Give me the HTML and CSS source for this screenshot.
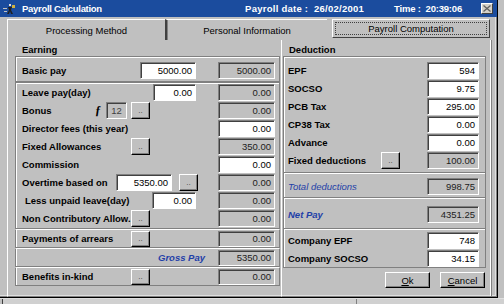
FILE: index.html
```html
<!DOCTYPE html>
<html>
<head>
<meta charset="utf-8">
<link rel="stylesheet" href="styles.css">
</head>
<body>
<div class="window">
  <div class="titlebar">
    <svg class="appicon" width="14" height="12" viewBox="0 0 14 12">
      <rect x="0" y="5" width="4" height="1" fill="#c0c0c0"/>
      <rect x="1" y="8" width="3" height="1" fill="#c0c0c0"/>
      <rect x="6" y="1" width="2" height="2" fill="#e0e0e0"/>
      <path d="M5 4 L9 4 L8 7 L10 11 L8 11 L7 8 L6 11 L4 11 L6 7 Z" fill="#202020"/>
      <rect x="9" y="2" width="3" height="3" fill="#d0b040"/>
    </svg>
    <span class="t-title">Payroll Calculation</span>
    <span class="t-date">Payroll date :&nbsp; 26/02/2001</span>
    <span class="t-time">Time :&nbsp; 20:39:06</span>
    <span class="t-close"><svg width="8" height="7" viewBox="0 0 8 7"><path d="M0.5 0.5 L7.5 6.5 M7.5 0.5 L0.5 6.5" stroke="#606060" stroke-width="1.3"/></svg></span>
  </div>
  <div class="tabs">
    <div class="tab t1">Processing Method</div>
    <div class="tab t2">Personal Information</div>
    <div class="tab t3"><span class="focus">Payroll Computation</span></div>
  </div>
  <div class="content">
    <section class="panel earning">
      <div class="phead">Earning</div>
      <div class="group g1">
        <div class="row"><span class="lbl">Basic pay</span><span class="fld wh w56 endi">5000.00</span><span class="fld ro rc">5000.00</span></div>
      </div>
      <div class="group g2">
        <div class="row"><span class="lbl">Leave pay(day)</span><span class="fld wh w43 endi">0.00</span><span class="fld ro rc">0.00</span></div>
        <div class="row"><span class="lbl">Bonus</span><span class="fn">ƒ</span><span class="fld ro w20 c12">12</span><span class="btn dots endb">..</span><span class="fld ro rc">0.00</span></div>
        <div class="row"><span class="lbl">Director fees (this year)</span><span class="fld wh rc">0.00</span></div>
        <div class="row"><span class="lbl">Fixed Allowances</span><span class="btn dots endb">..</span><span class="fld ro rc">350.00</span></div>
        <div class="row"><span class="lbl">Commission</span><span class="fld wh rc">0.00</span></div>
        <div class="row"><span class="lbl">Overtime based on</span><span class="fld wh w56 ot">5350.00</span><span class="btn dots endo">..</span><span class="fld ro rc">0.00</span></div>
        <div class="row"><span class="lbl ind">Less unpaid leave(day)</span><span class="fld wh w44 endi">0.00</span><span class="fld ro rc">0.00</span></div>
        <div class="row"><span class="lbl">Non Contributory Allow.</span><span class="btn dots endb">..</span><span class="fld ro rc">0.00</span></div>
      </div>
      <div class="group g3">
        <div class="row"><span class="lbl">Payments of arrears</span><span class="btn dots endb">..</span><span class="fld ro rc">0.00</span></div>
      </div>
      <div class="group g3">
        <div class="row"><span class="gross">Gross Pay</span><span class="fld ro rc">5350.00</span></div>
      </div>
      <div class="group g3">
        <div class="row"><span class="lbl">Benefits in-kind</span><span class="btn dots endb">..</span><span class="fld ro rc">0.00</span></div>
      </div>
    </section>
    <section class="panel deduction">
      <div class="phead">Deduction</div>
      <div class="group r1">
        <div class="row"><span class="lbl">EPF</span><span class="fld wh w52">594</span></div>
        <div class="row"><span class="lbl">SOCSO</span><span class="fld wh w52">9.75</span></div>
        <div class="row"><span class="lbl">PCB Tax</span><span class="fld wh w52">295.00</span></div>
        <div class="row"><span class="lbl">CP38 Tax</span><span class="fld wh w52">0.00</span></div>
        <div class="row"><span class="lbl">Advance</span><span class="fld wh w52">0.00</span></div>
        <div class="row"><span class="lbl">Fixed deductions</span><span class="btn dots endf">..</span><span class="fld ro w52">100.00</span></div>
      </div>
      <div class="group r2">
        <div class="row"><span class="lbl total">Total deductions</span><span class="fld ro w52">998.75</span></div>
      </div>
      <div class="group r3">
        <div class="row"><span class="lbl net">Net Pay</span><span class="fld ro w52">4351.25</span></div>
      </div>
      <div class="group r4">
        <div class="row"><span class="lbl">Company EPF</span><span class="fld wh w52">748</span></div>
        <div class="row"><span class="lbl">Company SOCSO</span><span class="fld wh w52">34.15</span></div>
      </div>
      <div class="actions">
        <span class="btn push"><u>O</u>k</span>
        <span class="btn push"><u>C</u>ancel</span>
      </div>
    </section>
  </div>
</div>
<div class="below">
  <div class="b1"></div>
  <div class="b2"></div>
  <div class="b3"></div>
</div>
</body>
</html>
```

FILE: styles.css
```css
* { box-sizing: border-box; }
html, body { margin: 0; padding: 0; }
body {
  width: 504px;
  height: 304px;
  overflow: hidden;
  background: #c0c0c0;
  font-family: "Liberation Sans", Arial, sans-serif;
  font-size: 9.5px;
  color: #000;
}
.window {
  width: 498px;
  height: 298px;
  background: #c0c0c0;
  border-right: 1px solid #000;
  border-bottom: 1px solid #000;
  box-shadow: inset -1px -1px #808080, inset -2px -2px #dfdfdf;
  display: flex;
  flex-direction: column;
}
.titlebar {
  height: 17px;
  flex: none;
  background: #1b4c9e;
  color: #fff;
  font-weight: bold;
  display: flex;
  align-items: center;
  padding: 0 4px 0 3px;
}
.appicon { flex: none; margin-right: 5px; }
.t-title { flex: 1; letter-spacing: -0.3px; }
.t-date { letter-spacing: 0.25px; }
.t-time { margin-left: 30px; letter-spacing: -0.2px; }
.t-close {
  margin-left: 19px;
  width: 12px;
  height: 11px;
  background: #d4d0c8;
  border: 1px solid;
  border-color: #fff #404040 #404040 #fff;
  display: flex;
  align-items: center;
  justify-content: center;
}
.tabs {
  height: 23px;
  flex: none;
  display: flex;
  padding: 2px 0 0 7px;
}
.tab {
  height: 21px;
  display: flex;
  align-items: center;
  justify-content: center;
  color: #000;
}
.t1 {
  width: 158px;
  border-top: 1px solid #fff;
  border-left: 1px solid #fff;
}
.t2 {
  width: 162px;
  border-top: 1px solid #fff;
  border-left: 2px solid #404040;
  box-shadow: inset 1px 0 #808080;
}
.t3 {
  width: 158px;
  margin-left: 5px;
  height: 19px;
  border: 1px solid;
  border-color: #fff #404040 #404040 #fff;
  padding: 2px;
}
.t3 .focus {
  width: 100%;
  height: 100%;
  border: 1px dotted #404040;
  display: flex;
  align-items: center;
  justify-content: center;
  padding-bottom: 1px;
}
.content {
  flex: 1;
  display: flex;
  padding: 0 5px 0 7px;
}
.panel {
  display: flex;
  flex-direction: column;
  border-left: 1px solid #fff;
  border-bottom: 1px solid #808080;
}
.earning { width: 274px; padding: 0 1px 0 7px; }
.deduction { width: 211px; padding: 0 5px 0 1px; border-right: 1px solid #808080; box-shadow: inset -1px 0 #fff; }
.phead {
  height: 16px;
  flex: none;
  font-weight: bold;
  display: flex;
  align-items: center;
  padding-left: 7px;
  padding-top: 2px;
}
.deduction .phead { padding-left: 6px; }
.group {
  flex: none;
  border: 1px solid #808080;
  box-shadow: inset 1px 1px #fff;
}
.g1 { padding: 4px 0 2px; }
.g2 { padding: 0 0 1px; border-top: 1px solid #808080; box-shadow: inset 1px 1px #fff; }
.g3 { padding: 0; border-top: 1px solid #fff; box-shadow: inset 1px 0 #fff; }
.g3 .row { height: 17px; }
.r1 { padding: 4px 0 3px; }
.r2 { padding: 4px 0 2px; border-top: none; box-shadow: inset 1px 1px #fff; }
.r3 { padding: 7px 0 5px; border-top: none; box-shadow: inset 1px 1px #fff; }
.r4 { padding: 2px 0 0; border-top: none; box-shadow: inset 1px 1px #fff; }
.row {
  height: 18px;
  display: flex;
  align-items: center;
  padding: 0 4px 0 6px;
}
.deduction .row { padding: 0 6px 0 4px; }
.lbl { font-weight: bold; margin-right: auto; white-space: nowrap; }
.lbl.ind { padding-left: 3px; }
.fld {
  height: 17px;
  display: flex;
  align-items: center;
  justify-content: flex-end;
  padding: 0 3px 0 2px;
  border: 1px solid;
  border-color: #808080 #fff #fff #808080;
  box-shadow: inset 1px 1px #404040;
  white-space: nowrap;
}
.g3 .fld { height: 16px; }
.wh { background: #fff; color: #000; }
.ro { background: #c0c0c0; color: #202020; }
.rc { width: 57px; }
.w56 { width: 56px; }
.w52 { width: 52px; }
.w44 { width: 44px; }
.w43 { width: 43px; }
.w20 { width: 21px; }
.c12 { justify-content: center; padding: 0; color: #404040; margin-right: 4px; }
.fn { font-weight: bold; font-style: italic; font-family: "Liberation Serif", serif; font-size: 12px; margin-right: 5px; }
.endi { margin-right: 22px; }
.endb { margin-right: 68px; }
.ot { margin-right: 7px; }
.endo { margin-right: 20px; }
.endf { margin-right: 27px; }
.btn {
  display: flex;
  align-items: center;
  justify-content: center;
  border: 1px solid;
  border-color: #fff #000 #000 #fff;
  box-shadow: inset -1px -1px #808080;
  background: #c0c0c0;
}
.dots {
  width: 19px;
  height: 17px;
  font-size: 8px;
  align-items: flex-end;
  padding-bottom: 3px;
  color: #404040;
  line-height: 1;
}
.g3 .dots { height: 16px; }
.gross {
  margin-left: auto;
  margin-right: 13px;
  font-weight: bold;
  font-style: italic;
  color: #1f3fa8;
}
.total { font-weight: normal; font-style: italic; color: #1f3fa8; }
.net { font-style: italic; color: #1f3fa8; }
.actions {
  display: flex;
  justify-content: flex-end;
  gap: 10px;
  padding: 4px 1px 0 0;
}
.push {
  width: 45px;
  height: 16px;
  font-size: 9.5px;
}
.push u { text-decoration: underline; }
.below {
  height: 6px;
  display: flex;
  border-top: 1px solid #dfdfdf;
}
.b1 { width: 3px; border-right: 1px solid #404040; }
.b2 { width: 354px; border-right: 1px solid #808080; background: #d0d0d0; }
.b3 { flex: 1; background: #d0d0d0; }
```
